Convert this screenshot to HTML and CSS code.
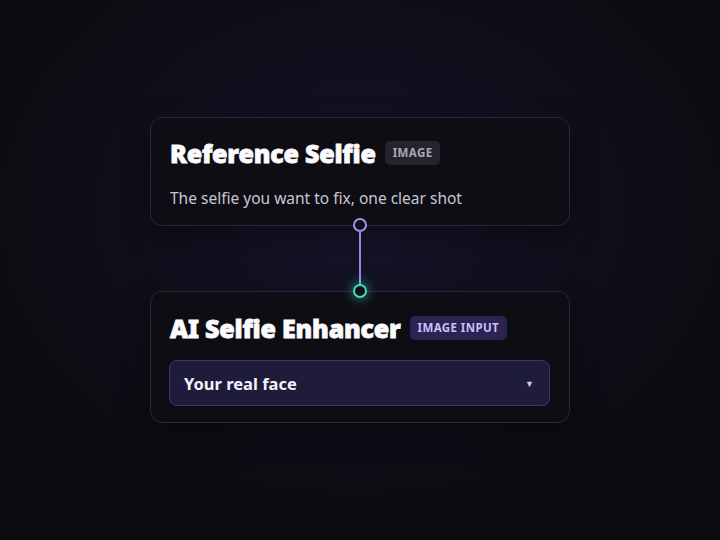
FILE: index.html
```html
<!DOCTYPE html>
<html>
<head>
<meta charset="utf-8">
<link rel="stylesheet" href="styles.css">
</head>
<body>
<main class="canvas">
  <section class="card card-ref">
    <div class="title-row">
      <h1 class="title">Reference Selfie</h1>
      <span class="badge badge-muted">IMAGE</span>
    </div>
    <p class="desc">The selfie you want to fix, one clear shot</p>
  </section>
  <div class="connector">
    <span class="port port-out"></span>
    <span class="wire"></span>
    <span class="port port-in"></span>
  </div>
  <section class="card card-ai">
    <div class="title-row">
      <h1 class="title">AI Selfie Enhancer</h1>
      <span class="badge badge-accent">IMAGE INPUT</span>
    </div>
    <div class="select">
      <span class="select-value">Your real face</span>
      <span class="select-arrow">▼</span>
    </div>
  </section>
</main>
</body>
</html>
```
FILE: styles.css
```css
* { box-sizing: border-box; }
html, body { margin: 0; padding: 0; }
body {
  width: 720px;
  height: 540px;
  overflow: hidden;
  background: radial-gradient(ellipse 420px 330px at 360px 210px, #17142b 0%, #110f1d 45%, #0b0b0f 100%);
  font-family: "Noto Sans", "Open Sans", sans-serif;
  color: #fff;
}
.canvas {
  height: 540px;
  display: flex;
  flex-direction: column;
  align-items: center;
  justify-content: center;
}
.card {
  width: 420px;
  background: #0e0d14;
  border: 1px solid #2a2935;
  border-radius: 12px;
  padding: 0 19px 0 18px;
  box-shadow: 0 10px 30px rgba(0,0,0,0.35);
}
.card-ref { height: 109px; padding-top: 19px; }
.card-ai { height: 132px; padding-top: 20px; }
.title-row {
  display: flex;
  align-items: center;
  gap: 9px;
  height: 32px;
  padding-left: 1px;
}
.title {
  margin: 0;
  font-family: "Noto Sans", sans-serif;
  font-weight: 900;
  font-size: 25px;
  line-height: 32px;
  color: #fbfbfd;
  letter-spacing: -0.2px;
  -webkit-text-stroke: 0.8px #fbfbfd;
}
.badge {
  font-family: "Noto Sans", sans-serif;
  font-weight: 700;
  font-size: 11.5px;
  letter-spacing: 0.4px;
  padding: 4px 8px;
  border-radius: 5px;
  line-height: 16px;
}
.badge-muted { background: #25242e; color: #a9a8b4; }
.badge-accent { background: #2b2352; color: #cdbff8; }
.desc {
  margin: 17px 0 0 1px;
  font-size: 15.5px;
  line-height: 24px;
  color: #c8c6d6;
}
.connector {
  position: relative;
  width: 16px;
  height: 65px;
}
.port {
  position: absolute;
  left: 1px;
  width: 14px;
  height: 14px;
  border-radius: 50%;
  background: #111018;
  z-index: 2;
}
.port-out { top: -8px; border: 2px solid #a392ee; }
.port-in {
  bottom: -7px;
  border: 2px solid #3fdcbc;
  box-shadow: 0 0 10px 3px rgba(63, 220, 188, 0.35);
}
.wire {
  position: absolute;
  left: 7px;
  top: 6px;
  bottom: 6px;
  width: 2px;
  background: linear-gradient(#9a88e8, #8a86e6 80%, #6fb8d8);
}
.select {
  margin-top: 16px;
  height: 46px;
  background: #1f1b3a;
  border: 1px solid #3e3575;
  border-radius: 8px;
  display: flex;
  align-items: center;
  justify-content: space-between;
  padding: 0 15px 0 14px;
}
.select-value {
  font-weight: 700;
  font-size: 16.5px;
  color: #f3f1fb;
}
.select-arrow {
  font-size: 9px;
  color: #cfc8ee;
}
```
